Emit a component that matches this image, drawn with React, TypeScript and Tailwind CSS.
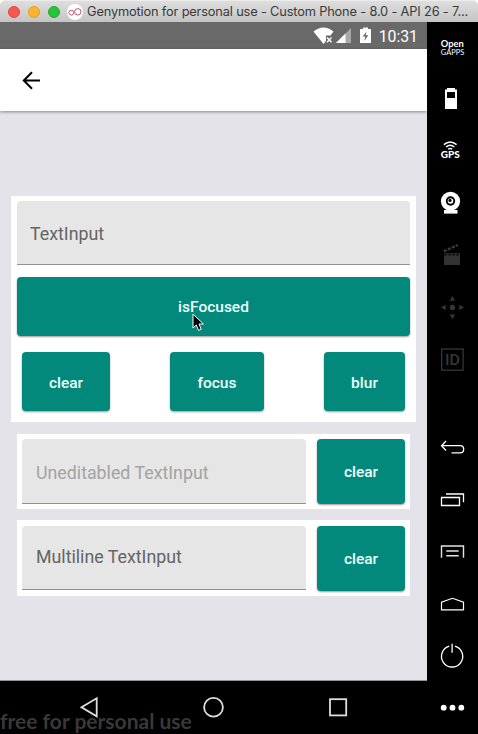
import type { ReactNode } from "react";

function Slot({ y, children }: { y: number; children: ReactNode }) {
  return (
    <svg
      className="block h-[52px] w-[51px] shrink-0"
      viewBox={`427 ${y} 51 52`}
      fill="none"
      stroke="none"
    >
      {children}
    </svg>
  );
}

function TitleBar() {
  return (
    <header className="flex h-[22px] shrink-0 items-center rounded-t-[5px] border-t border-[#ececec] bg-linear-to-b from-[#dedede] to-[#c4c4c4] pl-2">
      <div className="flex shrink-0 gap-2">
        <span className="size-3 rounded-full border border-[#e2463f] bg-[#fc5650]" />
        <span className="size-3 rounded-full border border-[#dfa023] bg-[#fdb42b]" />
        <span className="size-3 rounded-full border border-[#1dad2b] bg-[#27c33a]" />
      </div>
      <svg className="ml-[7px] size-4 shrink-0" viewBox="0 0 16 16">
        <circle cx="8" cy="8" r="8" fill="#fff" />
        <circle cx="4.3" cy="8.7" r="2.4" fill="none" stroke="#c2527b" />
        <circle cx="10.8" cy="7.8" r="3.2" fill="none" stroke="#c2527b" />
      </svg>
      <h1 className="ml-1 font-['Inter',sans-serif] text-[12.8px] leading-[18px] tracking-[-0.16px] whitespace-nowrap text-[#3a3a3a]">
        Genymotion for personal use - Custom Phone - 8.0 - API 26 - 7...
      </h1>
    </header>
  );
}

function StatusBar() {
  return (
    <div className="flex h-[27px] shrink-0 items-center justify-end bg-[#696969] pr-[9px] text-white">
      <svg className="h-[27px] w-[64px]" viewBox="311 22 64 27">
        <path d="M313.5 31.5 Q323.5 23.5 333.5 31.5 L330.5 35.5 H326 V41 L323.5 44Z" fill="#fff" />
        <path d="M327 37.5l4.5 4.7M331.5 37.5l-4.5 4.7" stroke="#fff" strokeWidth="1.4" />
        <path d="M336 43 L351 28 V43Z" fill="#a9a9a9" />
        <path d="M336 43 L345.5 33.5 V43Z" fill="#fff" />
        <path d="M360 29h3v-1.5h5V29h3v14h-11z" fill="#fff" />
        <path d="M366.5 31.5l-3.8 5h2.6l-1 4.5 4-5.7h-2.6z" fill="#696969" />
      </svg>
      <span className="ml-[4px] pt-[2px] font-['Roboto',sans-serif] text-[15.8px] leading-none">10:31</span>
    </div>
  );
}

function Button({ label, size }: { label: string; size: string }) {
  return (
    <button
      className={`${size} flex shrink-0 items-center justify-center rounded-[4px] bg-[#03897b] font-['Roboto',sans-serif] text-[15.5px] leading-none font-medium text-[#edfffc] shadow-[0_1px_2px_rgba(0,0,0,0.4)]`}
    >
      {label}
    </button>
  );
}

function Field({ text, look }: { text: string; look: string }) {
  return (
    <div
      className={`${look} flex items-center rounded-t-[4px] border-b border-[#929292] bg-[#e6e6e6] font-['Roboto',sans-serif] text-[17.8px] leading-none`}
    >
      {text}
    </div>
  );
}

function Sidebar() {
  return (
    <aside className="flex w-[51px] shrink-0 flex-col bg-black">
      <Slot y={22}>
        <g fill="#fff" fontFamily="Lato, sans-serif">
          <text x="440.8" y="46.5" fontSize="9.4" fontWeight="700" textLength="23" lengthAdjust="spacingAndGlyphs">Open</text>
          <text x="440.8" y="54.8" fontSize="7.6" textLength="23.4" lengthAdjust="spacingAndGlyphs">GAPPS</text>
        </g>
      </Slot>
      <Slot y={74}>
        <path d="M445 89.5h2V88h8v1.5h2V109h-12z" fill="#fff" />
        <path d="M447 92h8v6h-8z" fill="#000" />
      </Slot>
      <Slot y={126}>
        <g stroke="#fff" strokeWidth="1.4">
          <path d="M443.8 144.6q6.4-5.4 12.8 0" />
          <path d="M446 147q4.2-3.4 8.4 0" />
          <path d="M448.2 149.2q2-1.5 4 0" />
        </g>
        <text x="440.7" y="158.3" fill="#fff" fontSize="8.6" fontWeight="900" fontFamily="Lato, sans-serif" textLength="19" lengthAdjust="spacingAndGlyphs">GPS</text>
      </Slot>
      <Slot y={178}>
        <path d="M444 210h13.5v3.6H444z" fill="#fff" />
        <circle cx="450.5" cy="201.3" r="9.6" fill="#fff" />
        <circle cx="450.5" cy="201" r="4.7" fill="#000" />
        <circle cx="450.5" cy="201" r="2.8" fill="#fff" />
        <circle cx="450" cy="200.4" r="1.6" fill="#000" />
      </Slot>
      <Slot y={230}>
        <path d="M444 253.3h16V265h-16z" fill="#333" />
        <path d="M444.5 254.8h15" stroke="#000" strokeDasharray="2.4 1.6" strokeWidth="1.3" />
        <path d="M443.8 251.3 457.8 245" stroke="#3a3a3a" strokeWidth="2.4" strokeDasharray="3.2 1.2" />
      </Slot>
      <Slot y={282}>
        <g fill="#363636">
          <circle cx="452.4" cy="307.4" r="2.6" />
          <path d="M452.4 296l2.7 4.7h-5.4zM452.4 319.2l2.7-4.7h-5.4zM441 307.4l4.7-2.7v5.4zM464 307.4l-4.7-2.7v5.4z" />
        </g>
      </Slot>
      <Slot y={334}>
        <rect x="441.7" y="349" width="21.4" height="21.2" stroke="#363636" strokeWidth="1.3" />
        <text x="445" y="365.2" fill="#363636" fontSize="15.5" fontWeight="500" fontFamily="Roboto, sans-serif" textLength="15" lengthAdjust="spacingAndGlyphs">ID</text>
      </Slot>
      <div className="h-[35px] shrink-0" />
      <Slot y={421}>
        <path d="M446 441l-4.5 4.7 4.5 4.8M441.7 445.7H460q3.7 0 3.7 3.6t-3.7 3.6h-8.5" stroke="#fff" strokeWidth="1.3" />
      </Slot>
      <Slot y={473}>
        <path d="M441.5 497.5h18v8h-18zM446 494h17.5v8.3" stroke="#fff" strokeWidth="1.3" />
      </Slot>
      <Slot y={525}>
        <path d="M441.5 557.7V546h22v11.7M446.3 551h12.4M446.3 555.8h12.4" stroke="#e4e4e4" strokeWidth="1.4" />
      </Slot>
      <Slot y={577}>
        <path d="M441.5 609.8v-7.6l11-3.9 11 3.9v7.6z" stroke="#fff" strokeWidth="1.2" />
      </Slot>
      <Slot y={629}>
        <path d="M449.3 646.2a10.6 10.6 0 1 0 5.6 0M452.1 643.8v9" stroke="#fff" strokeWidth="1.3" />
      </Slot>
      <Slot y={681}>
        <g fill="#fff">
          <circle cx="443.7" cy="707.7" r="2.9" />
          <circle cx="452.5" cy="707.7" r="2.9" />
          <circle cx="461.3" cy="707.7" r="2.9" />
        </g>
      </Slot>
    </aside>
  );
}

export default function App() {
  return (
    <div className="flex h-[734px] w-[478px] flex-col overflow-hidden bg-white">
      <TitleBar />
      <div className="flex min-h-0 grow">
        <div className="flex w-[427px] shrink-0 flex-col">
          <StatusBar />
          <div className="z-10 flex h-[62px] shrink-0 items-center bg-white pl-[22px] shadow-[0_1px_3px_rgba(0,0,0,0.4)]">
            <svg className="size-[19px]" viewBox="22 70 19 19" fill="none" stroke="#000" strokeWidth="2">
              <path d="M32 71.3l-8.2 8.2 8.2 8.2M23.8 79.5H40" />
            </svg>
          </div>
          <main className="flex grow flex-col border-b border-[#929496] bg-[#e4e3ea] pt-[85px] pl-[11px]">
            <section className="flex h-[226px] w-[405px] flex-col bg-white px-[6px] pt-[5px]">
              <Field text="TextInput" look="h-[64px] pt-[3px] pl-[13px] text-[#646464]" />
              <div className="mt-[12px] flex">
                <Button label="isFocused" size="h-[59px] w-full pt-[2px]" />
              </div>
              <div className="mt-[16px] flex justify-between px-[5px]">
                <Button label="clear" size="h-[59px] w-[88px] pt-[4px]" />
                <Button label="focus" size="h-[59px] w-[94px] pt-[4px]" />
                <Button label="blur" size="h-[59px] w-[81px] pt-[4px]" />
              </div>
            </section>
            <section className="mt-[12px] ml-[6px] flex h-[75px] w-[393px] justify-between bg-white px-[5px] pt-[5px]">
              <Field text="Uneditabled TextInput" look="h-[65px] w-[284px] pt-[3px] pl-[14px] text-[#a3a3a3]" />
              <Button label="clear" size="h-[65px] w-[88px] pt-[3px]" />
            </section>
            <section className="mt-[11px] ml-[6px] flex h-[76px] w-[393px] justify-between bg-white px-[5px] pt-[6px]">
              <Field text="Multiline TextInput" look="h-[64px] w-[284px] pb-[2px] pl-[14px] text-[#646464]" />
              <Button label="clear" size="h-[65px] w-[88px] pt-[2px]" />
            </section>
          </main>
          <nav className="relative h-[53px] shrink-0 bg-black">
            <svg className="block h-[53px] w-[427px]" viewBox="0 681 427 53" fill="none" stroke="#dedede" strokeWidth="1.8">
              <path d="M81.5 707.3 96.7 698.3V716.3Z" />
              <circle cx="213.5" cy="707.2" r="9.4" />
              <rect x="330" y="699.2" width="16.2" height="16.2" />
            </svg>
            <span className="absolute top-[28px] left-0 font-['Lato',sans-serif] text-[21px] leading-[24px] font-bold whitespace-nowrap text-[#5a5a5a]/65">
              free for personal use
            </span>
          </nav>
        </div>
        <Sidebar />
      </div>
      <svg className="absolute top-[313px] left-[191px] h-[19px] w-[14px]" viewBox="0 0 14 19">
        <path d="M2 1v14l3.3-3 2.3 5.4 2.6-1.1L8 11h4.4z" fill="#000" stroke="#fff" strokeWidth="1" />
      </svg>
    </div>
  );
}
